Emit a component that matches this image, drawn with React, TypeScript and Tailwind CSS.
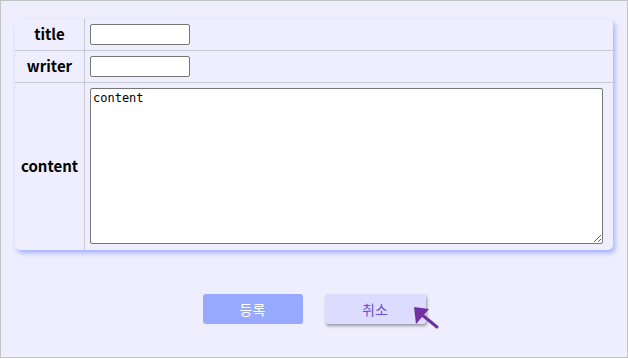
export default function App() {
  return (
    <div className="w-[628px] h-[358px] border border-[#c3c3c3] bg-[#efeefe] font-['Noto_Sans_CJK_KR','Noto_Sans',sans-serif] overflow-hidden">
      <div className="pt-[18px] pl-[14px] pr-[15px]">
        <table className="w-[598px] border-separate border-spacing-0 rounded-[5px] bg-[#efeefe] shadow-[2px_3px_5px_#a3afff] overflow-hidden">
          <tbody>
            <tr className="h-[32px]">
              <th className="w-[70px] border-r border-b border-[#c9c9d2] text-[15px] font-bold text-black">title</th>
              <td className="border-b border-[#c9c9d2] pl-[5px]">
                <input className="block w-[100px] h-[21px] bg-white border border-[#767676] rounded-[2px]" />
              </td>
            </tr>
            <tr className="h-[32px]">
              <th className="border-r border-b border-[#c9c9d2] text-[15px] font-bold text-black">writer</th>
              <td className="border-b border-[#c9c9d2] pl-[5px]">
                <input className="block w-[100px] h-[21px] bg-white border border-[#767676] rounded-[2px]" />
              </td>
            </tr>
            <tr className="h-[167px]">
              <th className="border-r border-[#c9c9d2] text-[15px] font-bold text-black">content</th>
              <td className="align-top pl-[5px] pr-[10px] pt-[5px] pb-[6px]">
                <textarea
                  defaultValue="content"
                  className="block w-full h-[156px] bg-white border border-[#767676] rounded-[2px] px-[2px] py-[1px] text-[12px] leading-[16px] font-['DejaVu_Sans_Mono',monospace] text-black"
                />
              </td>
            </tr>
          </tbody>
        </table>
      </div>
      <div className="flex justify-center gap-[22px] mt-[44px]">
        <button className="w-[100px] h-[30px] rounded-[3px] bg-[#97a9ff] text-white text-[14px]">등록</button>
        <div className="relative">
          <button className="w-[101px] h-[30px] rounded-[3px] bg-[#dcdcff] text-[#6a4fd6] text-[14px] shadow-[1px_2px_3px_#9a9aa8]">취소</button>
          <svg className="absolute left-[86px] top-[10px]" width="30" height="26" viewBox="0 0 30 26">
            <line x1="26" y1="23" x2="10" y2="10" stroke="#7030a0" strokeWidth="3" strokeLinecap="round" />
            <polygon points="3,3 18,5 5,20" fill="#7030a0" />
          </svg>
        </div>
      </div>
    </div>
  )
}
